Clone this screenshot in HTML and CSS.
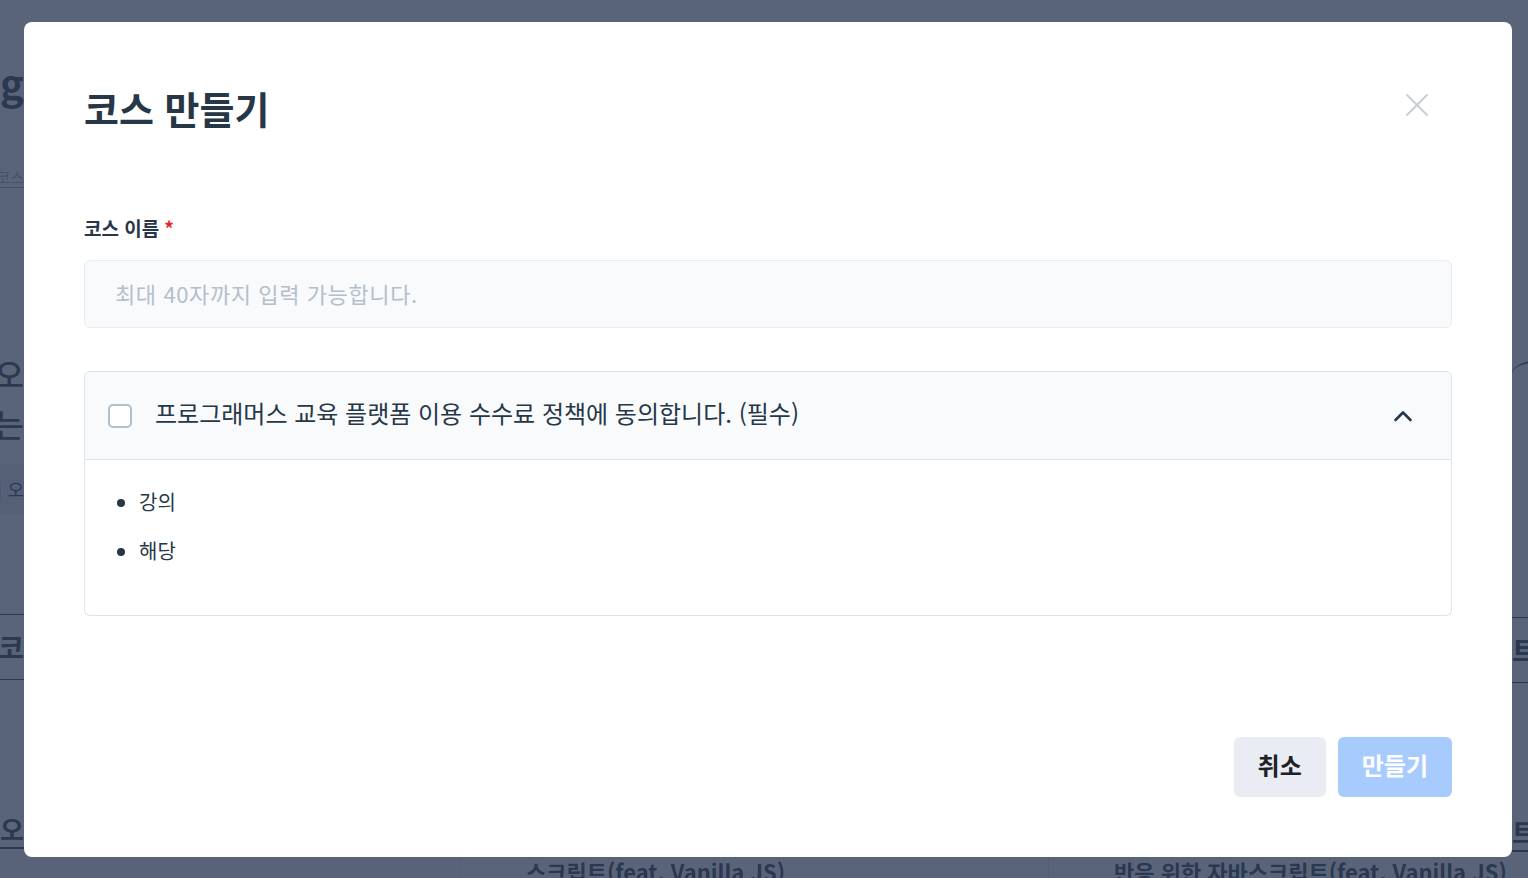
FILE: index.html
```html
<!DOCTYPE html>
<html lang="ko">

<head>
  <meta charset="UTF-8">
  <meta name="viewport" content="width=device-width, initial-scale=1.0">
  <title>코스 만들기</title>
  <link rel="stylesheet" href="styles.css">
</head>

<body>
  <!-- 모달 뒤에 깔린 페이지 (거의 가려짐) -->
  <div class="page">
    <div class="page-row">
      <div class="edge edge-left">
        <h1 class="bg-title">Learning</h1>
        <div class="bg-tab">나의 코스</div>
        <p class="bg-hero">새로운 코스로 오<br>함께 성장하는</p>
        <div class="bg-btn">코스 보러 오</div>
        <div class="bg-section">추천 인기 코</div>
        <div class="bg-link">강의 소개 입오</div>
      </div>
      <div class="edge edge-right">
        <div class="bg-art"></div>
        <div class="bg-section">트</div>
        <div class="bg-link">트오</div>
      </div>
    </div>
    <div class="bg-cards">
      <div class="bg-card"></div>
      <div class="bg-card">스크립트(feat. Vanilla JS)</div>
      <div class="bg-card">반응 위한 자바스크립트(feat. Vanilla JS)</div>
    </div>
  </div>

  <div class="dim">
    <div class="modal">
      <div class="modal-header">
        <h2>코스 만들기</h2>
        <button class="close-btn" aria-label="닫기">
          <svg width="24" height="24" viewBox="0 0 24 24" fill="none" stroke="currentColor" stroke-width="2" stroke-linecap="round">
            <path d="M2 2L22 22M22 2L2 22" />
          </svg>
        </button>
      </div>

      <div class="modal-body">
        <label class="field-label" for="courseName">코스 이름<span class="required">*</span></label>
        <input id="courseName" class="text-input" type="text" placeholder="최대 40자까지 입력 가능합니다.">

        <div class="agree">
          <div class="agree-head">
            <span class="checkbox"></span>
            <span class="agree-text">프로그래머스 교육 플랫폼 이용 수수료 정책에 동의합니다. (필수)</span>
            <svg class="chevron" width="20" height="20" viewBox="0 0 20 20" fill="none" stroke="currentColor" stroke-width="2.6" stroke-linecap="round" stroke-linejoin="round">
              <path d="M2.5 14L10 6.5L17.5 14" />
            </svg>
          </div>
          <div class="agree-body">
            <ul>
              <li>강의</li>
              <li>해당</li>
            </ul>
          </div>
        </div>
      </div>

      <div class="modal-footer">
        <button class="btn btn-cancel">취소</button>
        <button class="btn btn-primary" disabled>만들기</button>
      </div>
    </div>
  </div>
</body>

</html>
```

FILE: styles.css
```css
* {
  box-sizing: border-box;
}

body {
  margin: 0;
  font-family: "Noto Sans CJK KR", "Noto Sans", sans-serif;
  background-color: #fff;
  color: #263747;
  overflow: hidden;
  height: 100vh;
}

/* 뒤 페이지 */
.page {
  height: 100vh;
  display: flex;
  flex-direction: column;
  overflow: hidden;
}

.page-row {
  flex: 1;
  min-height: 0;
  overflow: hidden;
  display: flex;
  justify-content: space-between;
}

.edge {
  display: flex;
  flex-direction: column;
  overflow: hidden;
  white-space: nowrap;
}

.edge-left {
  width: 24px;
  align-items: flex-end;
  padding-top: 58px;
}

.edge-right {
  width: 16px;
  align-items: flex-start;
  padding-top: 360px;
}

.bg-title {
  margin: 0;
  font-size: 40px;
  font-weight: 700;
  line-height: 48px;
}

.bg-tab {
  margin-top: 60px;
  font-size: 15px;
  color: #98a8b9;
  border-bottom: 1px solid #98a8b9;
}

.bg-hero {
  margin: 160px 0 0;
  font-size: 32px;
  line-height: 50px;
  font-weight: 500;
  text-align: right;
}

.bg-btn {
  margin-top: 16px;
  padding: 12px 0 12px 16px;
  background: #e9ecf3;
  font-size: 18px;
}

.bg-section {
  margin-top: 100px;
  padding: 12px 0;
  font-size: 28px;
  font-weight: 700;
  border-top: 1px solid #263747;
  border-bottom: 1px solid #263747;
}

.edge-right .bg-section {
  margin-top: 230px;
}

.bg-link {
  margin-top: 130px;
  font-size: 26px;
  font-weight: 700;
  border-bottom: 2px solid #263747;
}

.bg-art {
  width: 60px;
  height: 80px;
  border-top: 2px solid #263747;
  border-radius: 50% 0 0 0;
}

.bg-cards {
  height: 26px;
  flex-shrink: 0;
  display: flex;
}

.bg-card {
  flex: 1;
  padding: 4px 0 0 65px;
  font-size: 22px;
  line-height: 30px;
  font-weight: 700;
  white-space: nowrap;
  overflow: hidden;
  border-left: 1px solid #d7e2eb;
  background: #fff;
}

.bg-card:first-child {
  flex: 0 0 460px;
  background: #f5f6f8;
  border-left: none;
}

.bg-card:nth-child(2) {
  flex: 0 0 588px;
}

/* 딤 + 모달 */
.dim {
  position: fixed;
  inset: 0;
  background-color: rgba(44, 57, 83, 0.78);
  display: flex;
  padding: 22px 16px 21px 24px;
}

.modal {
  flex: 1;
  display: flex;
  flex-direction: column;
  background-color: #fff;
  border-radius: 8px;
  padding: 62px 60px 60px;
}

.modal-header {
  display: flex;
  align-items: center;
  justify-content: space-between;
}

.modal-header h2 {
  margin: 0;
  font-size: 38px;
  line-height: 48px;
  font-weight: 700;
  color: #263747;
}

.close-btn {
  width: 40px;
  height: 40px;
  margin: 0 15px 6px 0;
  padding: 0;
  border: none;
  background: none;
  color: #c9ced6;
  display: flex;
  justify-content: center;
  align-items: center;
  cursor: pointer;
}

.modal-body {
  flex: 1;
  display: flex;
  flex-direction: column;
  padding-top: 84px;
}

.field-label {
  font-size: 19px;
  line-height: 24px;
  font-weight: 700;
  color: #263747;
}

.required {
  color: #e5252a;
  margin-left: 5px;
}

.text-input {
  margin-top: 20px;
  height: 68px;
  padding: 0 30px 3px;
  border: 1px solid #e9ecf3;
  border-radius: 6px;
  background-color: #f9fafc;
  font-family: inherit;
  font-size: 22px;
  letter-spacing: 0.6px;
  color: #263747;
  outline: none;
}

.text-input::placeholder {
  color: #b2c0cc;
}

.agree {
  margin-top: 43px;
}

.agree-head {
  height: 89px;
  display: flex;
  align-items: center;
  padding: 0 38px 0 23px;
  background-color: #f9fafc;
  border: 1px solid #dfe4ea;
  border-radius: 6px 6px 0 0;
}

.checkbox {
  width: 24px;
  height: 24px;
  border: 2px solid #b2c0cc;
  border-radius: 5px;
  background: #fff;
  flex-shrink: 0;
}

.agree-text {
  flex: 1;
  margin: 0 0 6px 23px;
  font-size: 24px;
  line-height: 32px;
  color: #263747;
}

.chevron {
  color: #263747;
}

.agree-body {
  height: 156px;
  border: 1px solid #dfe4ea;
  border-top: none;
  border-radius: 0 0 6px 6px;
  padding: 25px 0 0 0;
}

.agree-body ul {
  margin: 0;
  padding-left: 54px;
  font-size: 20px;
  line-height: 34px;
  color: #263747;
}

.agree-body li + li {
  margin-top: 15px;
}

.modal-footer {
  display: flex;
  justify-content: flex-end;
  gap: 12px;
}

.btn {
  height: 60px;
  padding: 0 24px 5px;
  border: none;
  border-radius: 6px;
  font-family: inherit;
  font-size: 24px;
  font-weight: 700;
  cursor: pointer;
}

.btn-cancel {
  background-color: #e9ecf3;
  color: #1e2125;
}

.btn-primary {
  background-color: #a8cbfe;
  color: #fff;
}
```
